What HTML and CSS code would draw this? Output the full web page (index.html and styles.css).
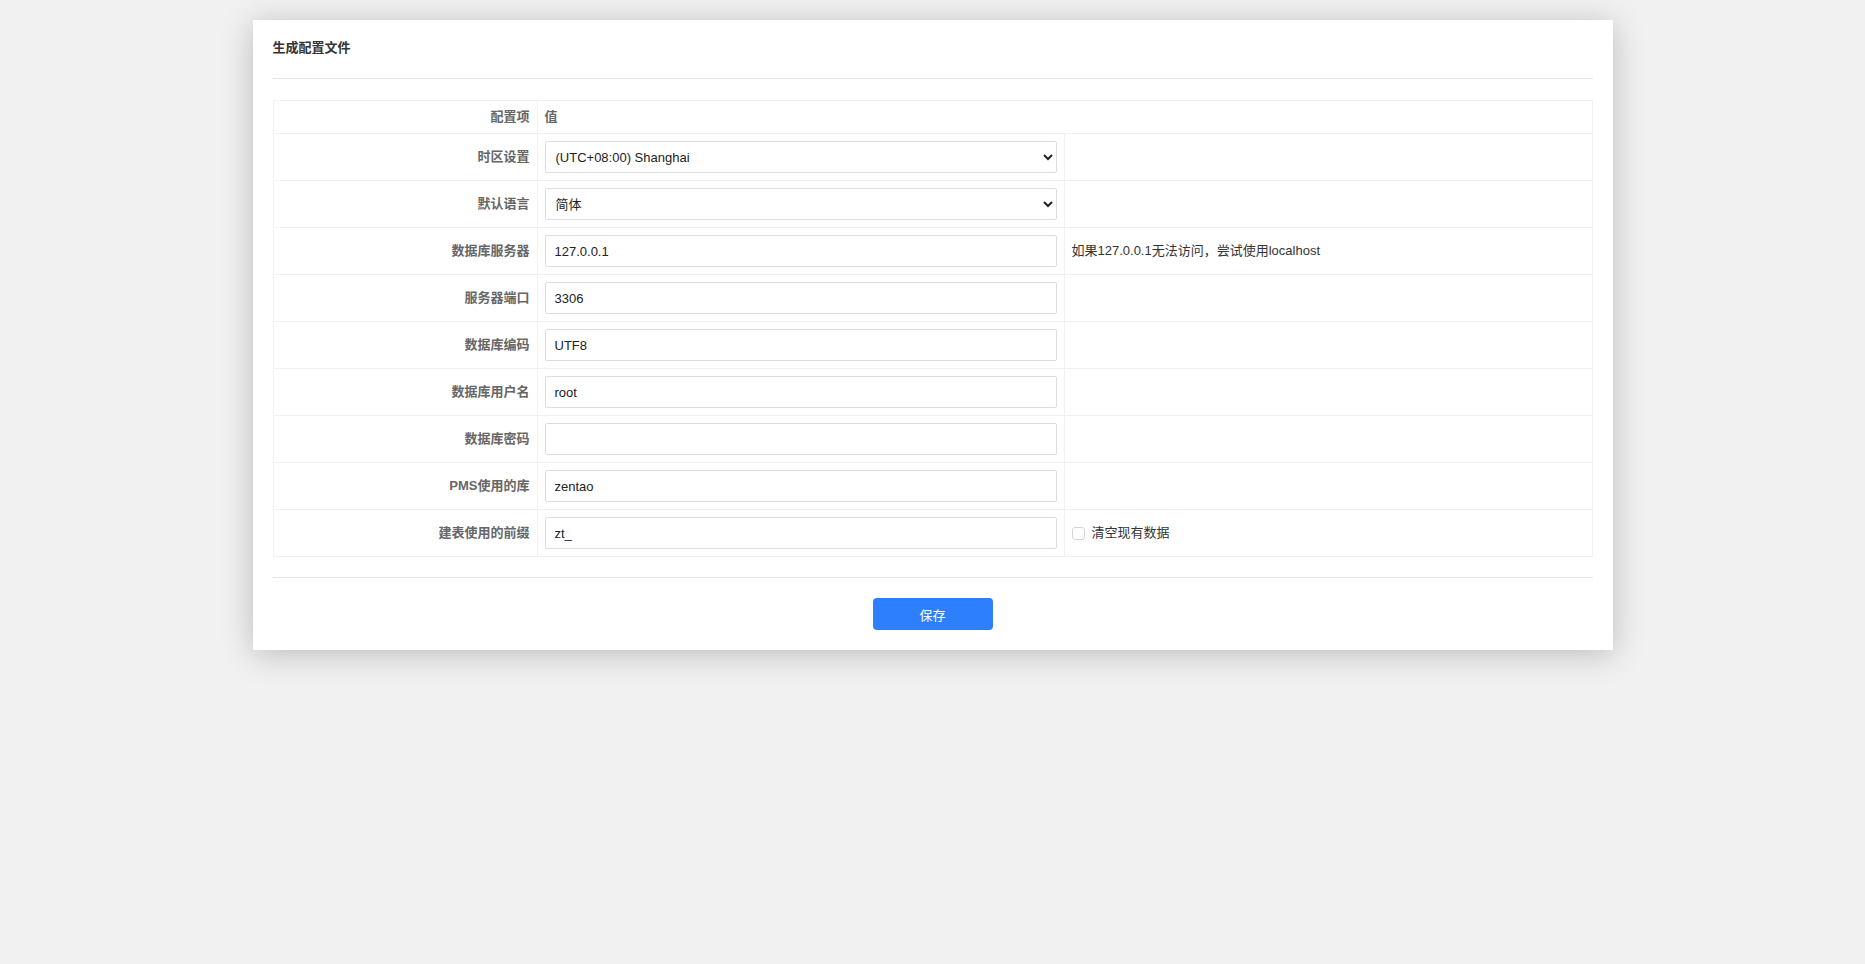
FILE: index.html
```html
<!DOCTYPE html>
<html lang="zh-CN">
<head>
<meta charset="utf-8">
<title>生成配置文件</title>
<link rel="stylesheet" href="styles.css">
</head>
<body>
<div class="page">
<div class="card">
  <div class="card-header">
    <div class="card-title">生成配置文件</div>
  </div>
  <table class="config-table">
    <colgroup>
      <col class="col-label">
      <col class="col-value">
      <col class="col-extra">
    </colgroup>
    <thead>
      <tr>
        <th class="label-cell">配置项</th>
        <th class="value-head" colspan="2">值</th>
      </tr>
    </thead>
    <tbody>
      <tr>
        <th class="label-cell">时区设置</th>
        <td class="field-cell">
          <select class="control">
            <option>(UTC+08:00) Shanghai</option>
          </select>
        </td>
        <td></td>
      </tr>
      <tr>
        <th class="label-cell">默认语言</th>
        <td class="field-cell">
          <select class="control">
            <option>简体</option>
          </select>
        </td>
        <td></td>
      </tr>
      <tr>
        <th class="label-cell">数据库服务器</th>
        <td class="field-cell"><input class="control" type="text" value="127.0.0.1"></td>
        <td class="hint-cell">如果127.0.0.1无法访问，尝试使用localhost</td>
      </tr>
      <tr>
        <th class="label-cell">服务器端口</th>
        <td class="field-cell"><input class="control" type="text" value="3306"></td>
        <td></td>
      </tr>
      <tr>
        <th class="label-cell">数据库编码</th>
        <td class="field-cell"><input class="control" type="text" value="UTF8"></td>
        <td></td>
      </tr>
      <tr>
        <th class="label-cell">数据库用户名</th>
        <td class="field-cell"><input class="control" type="text" value="root"></td>
        <td></td>
      </tr>
      <tr>
        <th class="label-cell">数据库密码</th>
        <td class="field-cell"><input class="control" type="password" value=""></td>
        <td></td>
      </tr>
      <tr>
        <th class="label-cell">PMS使用的库</th>
        <td class="field-cell"><input class="control" type="text" value="zentao"></td>
        <td></td>
      </tr>
      <tr>
        <th class="label-cell">建表使用的前缀</th>
        <td class="field-cell"><input class="control" type="text" value="zt_"></td>
        <td class="hint-cell">
          <label class="check"><input type="checkbox" class="check-box"><span>清空现有数据</span></label>
        </td>
      </tr>
    </tbody>
  </table>
  <div class="card-footer">
    <button class="btn-primary" type="button">保存</button>
  </div>
</div>
</div>
</body>
</html>
```

FILE: styles.css
```css
html, body {
  margin: 0;
  padding: 0;
}

html {
  background: #f1f1f1;
}

body {
  background: #f1f1f1;
  font-family: "Liberation Sans", "Noto Sans CJK SC", Arial, sans-serif;
  font-size: 13px;
  color: #333;
  line-height: 20px;
  min-height: 100vh;
}

.page {
  padding: 20px 0 60px;
}

.card {
  width: 1360px;
  margin: 0 auto;
  background: #fff;
  box-shadow: 0 4px 30px rgba(0, 0, 0, 0.22);
  padding: 0 20px 20px;
  box-sizing: border-box;
}

.card-header {
  padding: 18px 0 20px;
  border-bottom: 1px solid #e5e5e5;
}

.card-title {
  font-weight: bold;
  color: #333;
  line-height: 20px;
}

.config-table {
  width: 100%;
  margin-top: 21px;
  border-collapse: collapse;
  table-layout: fixed;
}

.col-label { width: 264px; }
.col-value { width: 527px; }

.config-table th,
.config-table td {
  border: 1px solid #f1f1f1;
  padding: 7px;
  vertical-align: middle;
}

.config-table thead th {
  padding: 6px 7px;
  height: 20px;
}

.label-cell {
  text-align: right;
  font-weight: bold;
  color: #666;
}

.value-head {
  text-align: left;
  font-weight: bold;
  color: #666;
}

.control {
  display: block;
  width: 100%;
  height: 32px;
  box-sizing: border-box;
  border: 1px solid #ddd;
  border-radius: 2px;
  padding: 0 9px;
  font-family: "Liberation Sans", "Noto Sans CJK SC", Arial, sans-serif;
  font-size: 13px;
  color: #222;
  background: #fff;
  margin: 0;
  outline: none;
}

select.control {
  padding: 0 6px;
}

.hint-cell {
  color: #333;
}

.check {
  display: flex;
  align-items: center;
  gap: 7px;
  color: #333;
}

.check-box {
  appearance: none;
  -webkit-appearance: none;
  width: 13px;
  height: 13px;
  margin: 0;
  border: 1px solid #d5d5d5;
  border-radius: 3px;
  background: #fff;
  box-sizing: border-box;
}

.card-footer {
  margin-top: 20px;
  border-top: 1px solid #e5e5e5;
  padding-top: 20px;
  display: flex;
  justify-content: center;
}

.btn-primary {
  width: 120px;
  height: 32px;
  border: none;
  border-radius: 4px;
  background: #2e7ffe;
  color: #fff;
  font-family: "Liberation Sans", "Noto Sans CJK SC", Arial, sans-serif;
  font-size: 13px;
  padding: 0;
  cursor: pointer;
}
```
